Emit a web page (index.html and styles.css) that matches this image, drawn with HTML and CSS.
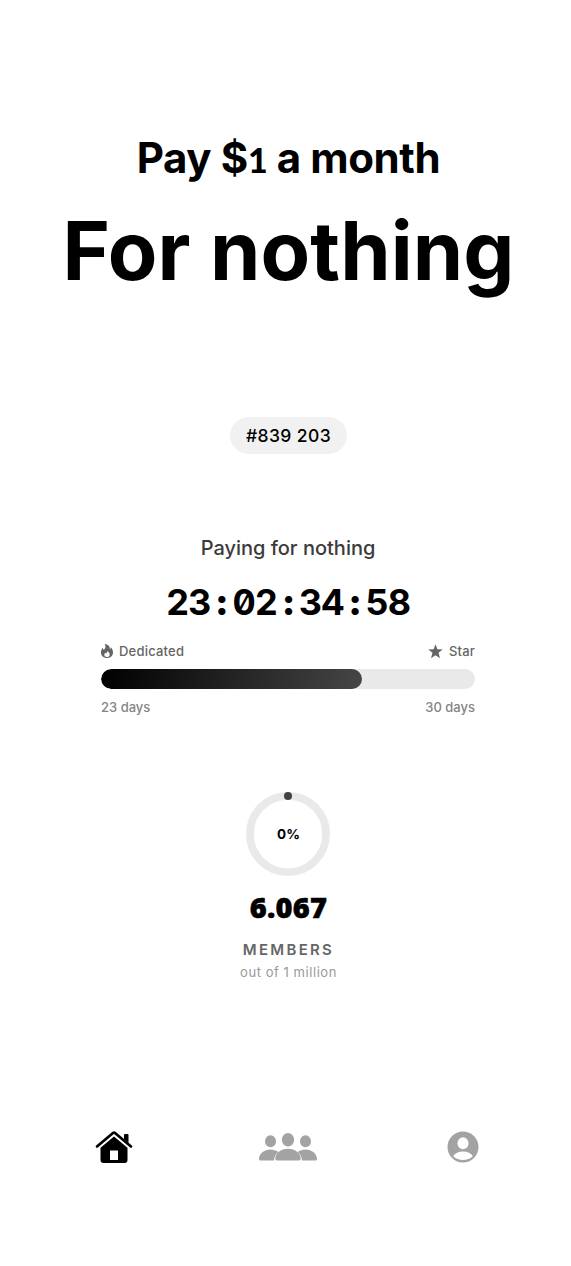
FILE: index.html
```
<!DOCTYPE html>
<html lang="en">
<head>
<meta charset="utf-8">
<meta name="viewport" content="width=device-width, initial-scale=1">
<title>For nothing</title>
<link rel="stylesheet" href="styles.css">
</head>
<body>
<main class="screen">
  <header class="hero">
    <p class="price">Pay $<span class="one">1</span> a month</p>
    <h1 class="headline">For nothing</h1>
  </header>
  <div class="number">#839 203</div>
  <section class="streak">
    <h2 class="streak-title">Paying for nothing</h2>
    <div class="timer">23<span class="colon">:</span>02<span class="colon">:</span>34<span class="colon">:</span>58</div>
    <div class="row levels">
      <span class="level"><svg class="flame" viewBox="0 0 12 14"><path fill-rule="evenodd" d="M3.600 0C7.700.4 9.300 2.900 8.800 5.200c.8-.3 1.100-1 1-1.900C11.300 4.700 12 6.500 12 8.500 12 11.800 9.500 14 6 14S0 11.700 0 8.500C0 6.500.6 5 1.600 3.700c.2 1 .6 1.600 1.300 2C4.800 4.200 5 1.800 3.600 0zM6.300 7c.2 1.500-.8 2-1.300 2.500l-.8-.7c-.6.700-.9 1.300-.9 2 0 1.400 1.100 2.200 2.700 2.200s2.700-.9 2.700-2.300C8.700 9 7.700 7.700 6.300 7z"/></svg>Dedicated</span>
      <span class="level"><svg class="star" viewBox="0 0 14 14"><path d="M7 .2l1.750 4.700 5 .2-3.950 3.100 1.400 5.200L7 10.500l-4.200 2.900 1.400-5.200L.25 5.100l5-.2z"/></svg>Star</span>
    </div>
    <div class="bar"><div class="fill" style="width:69.8%"></div></div>
    <div class="row days"><span>23 days</span><span>30 days</span></div>
  </section>
  <section class="members">
    <div class="ring">
      <svg class="ring-track" viewBox="0 0 84 84"><circle cx="42" cy="42" r="38.100" fill="none" stroke="#e9e9e9" stroke-width="7.800"/><circle cx="42" cy="4" r="4" fill="#424242"/></svg>
      <span class="percent">0%</span>
    </div>
    <div class="count">6.067</div>
    <div class="label">MEMBERS</div>
    <div class="goal">out of 1 million</div>
  </section>
  <nav class="tabs">
    <a class="tab active"><svg class="home" viewBox="0 0 38 34"><path d="M2 16.500L18 3q1-.8 2 0l16 13.500" fill="none" stroke="currentColor" stroke-width="2.700" stroke-linecap="round" stroke-linejoin="round"/><path d="M29 5q0-1 1-1h2.500q1 0 1 1v8L29 9.200z"/><path fill-rule="evenodd" d="M19 6.500l13.500 11.300V30q0 3-3 3h-21q-3 0-3-3V17.800zM15.500 20.500h-.5v9.500h8v-9.500z"/></svg></a>
    <a class="tab"><svg class="people" viewBox="0 0 58 29"><ellipse cx="11.500" cy="8.300" rx="5.500" ry="6"/><ellipse cx="46.500" cy="8.300" rx="5.500" ry="6"/><path d="M0 26.300c0-5.500 5-9.800 11.500-9.800 3 0 5.800.9 7.900 2.600-2.500 1.900-4.100 4.600-4.400 8.400H1.200Q0 27.500 0 26.300zM58 26.300c0-5.500-5-9.800-11.500-9.800-3 0-5.800.9-7.900 2.600 2.500 1.900 4.100 4.600 4.400 8.400h13.800q1.200 0 1.200-1.200z"/><ellipse cx="29" cy="6.800" rx="6.200" ry="6.800"/><path d="M16.300 25.800c0-5.500 5.400-10 12.700-10s12.700 4.500 12.700 10q0 1.700-1.700 1.700H18q-1.700 0-1.700-1.700z"/></svg></a>
    <a class="tab"><svg class="profile" viewBox="0 0 32 32"><circle cx="16" cy="16" r="15.500"/><ellipse cx="16" cy="12.200" rx="5.500" ry="6" fill="#fff"/><path d="M6.200 25.200C8 22 11.500 20.400 16 20.400s8 1.600 9.800 4.800C23.100 27.800 19.800 29 16 29s-7.100-1.200-9.800-3.800z" fill="#fff"/></svg></a>
  </nav>
</main>
</body>
</html>
```
FILE: styles.css
```
* { box-sizing: border-box; margin: 0; }
body { background: #fff; color: #000; font-family: Inter, "Liberation Sans", sans-serif; }
svg { display: block; fill: currentColor; flex: none; }
.screen { height: 1266px; display: flex; flex-direction: column; align-items: center; padding: 133px 0 0 6px; }
.hero { text-align: center; white-space: nowrap; }
.price { height: 50px; font-size: 42px; line-height: 50px; font-weight: 680; letter-spacing: -.4px; }
.one { font-family: Lato, sans-serif; font-size: 34px; font-weight: 900; }
.headline { font-size: 81px; line-height: 100px; font-weight: 650; margin-top: 18px; letter-spacing: .1px; }
.number { margin-top: 116px; width: 117px; height: 37px; border-radius: 19px; background: #f1f1f1; font-size: 17.500px; font-weight: 550; line-height: 37px; text-align: center; white-space: nowrap; letter-spacing: .4px; }
.streak { width: 374px; margin: 81px 1px 0 0; text-align: center; }
.streak-title { color: #3b3b3b; font-size: 20px; line-height: 26px; font-weight: 500; }
.timer { margin-top: 19px; font-size: 36px; line-height: 44px; font-weight: 650; font-feature-settings: "tnum", "zero"; white-space: nowrap; letter-spacing: -1px; }
.colon { display: inline-block; width: 22px; text-align: center; font-weight: 900; }
.row { display: flex; justify-content: space-between; }
.levels { margin-top: 18px; height: 18px; color: #656565; font-size: 13px; line-height: 18px; font-weight: 550; letter-spacing: .2px; }
.level { display: flex; align-items: center; gap: 6px; }
.flame { width: 12px; height: 14px; }
.star { width: 15px; height: 15px; }
.bar { margin-top: 9px; height: 20px; border-radius: 10px; background: #e9e9e9; overflow: hidden; }
.fill { height: 20px; border-radius: 10px; background: linear-gradient(105deg, #000, #464646); }
.days { margin-top: 9px; color: #858585; font-size: 13px; line-height: 18px; font-weight: 500; }
.members { margin-top: 76px; display: flex; flex-direction: column; align-items: center; }
.ring { display: grid; place-items: center; }
.ring > * { grid-area: 1 / 1; }
.ring-track { width: 84px; height: 84px; }
.percent { font-size: 13.5px; line-height: 18px; font-weight: 650; }
.count { margin-top: 13px; font-family: "Open Sans", sans-serif; font-size: 29px; line-height: 36px; font-weight: 800; -webkit-text-stroke: .5px #000; letter-spacing: .2px; }
.label { margin-top: 15px; color: #666; font-size: 15px; line-height: 20px; font-weight: 600; letter-spacing: 2.3px; }
.goal { margin-top: 3px; color: #999; font-size: 13px; line-height: 18px; letter-spacing: .55px; }
.tabs { width: 523px; height: 36px; margin-top: 148px; display: grid; grid-template-columns: repeat(3, 1fr); justify-items: center; align-items: center; color: #a3a3a3; }
.tab.active { color: #000; }
.home { width: 38px; height: 34px; }
.people { width: 58px; height: 29px; }
.profile { width: 32px; height: 32px; }
```
